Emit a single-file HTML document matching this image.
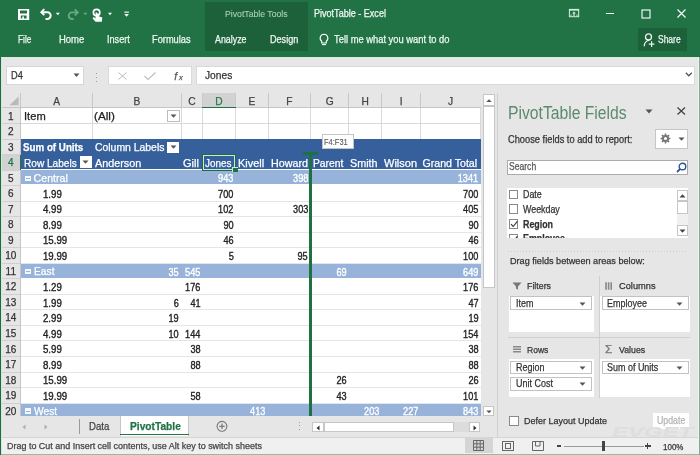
<!DOCTYPE html>
<html><head><meta charset="utf-8"><style>
html,body{margin:0;padding:0;}
body{width:700px;height:455px;overflow:hidden;position:relative;background:#fff;font-family:"Liberation Sans", sans-serif;}
#root{position:absolute;left:0;top:0;width:700px;height:455px;will-change:transform;}
.a{position:absolute;}
.t{line-height:1;white-space:pre;-webkit-text-stroke:0.25px currentColor;}
svg{overflow:visible;}
</style></head><body><div id="root">
<div class="a" style="left:0.00px;top:0.00px;width:700.00px;height:56.50px;background:#217346;"></div>
<div class="a" style="left:205.00px;top:1.50px;width:103.00px;height:49.50px;background:#1c6139;"></div>
<svg class="a" style="left:0;top:0" width="140" height="30" viewBox="0 0 140 30"><path d="M18 9.1h11.2v10.8H18z M20 10.4v3h7v-3z M20.8 15.4v3.1h1.5v-1.9h1.7v1.9h2.6v-3.1z" fill="#fff" fill-rule="evenodd"/><path d="M44.3 9.2L41.3 12.2 44.3 15.2" fill="none" stroke="#fff" stroke-width="1.9" stroke-linejoin="miter"/><path d="M41.8 12.2h5.5a3.4 3.4 0 0 1 0 6.8H45.5" fill="none" stroke="#fff" stroke-width="1.9"/><path d="M55.8 12.8h4l-2 2.5z" fill="#fff"/><path d="M74.8 9.4L77.8 12.4 74.8 15.4" fill="none" stroke="#6aa982" stroke-width="1.9"/><path d="M77.3 12.4h-5.3a3.3 3.3 0 0 0 0 6.6H73.5" fill="none" stroke="#6aa982" stroke-width="1.9"/><path d="M83.3 12.8h4l-2 2.5z" fill="#6aa982"/><circle cx="96.6" cy="12.6" r="3.2" fill="none" stroke="#fff" stroke-width="1.7"/><path d="M95.6 12.4v6l-1.6-1.3-1.5 1.1 3 3.6h6.3l0.5-4.3-3.6-1.3v-2.8h-1.6v-1z" fill="#fff"/><path d="M108 12.8h4l-2 2.5z" fill="#fff"/><rect x="124.3" y="11.6" width="4.6" height="1.1" fill="#fff"/><path d="M124.3 13.9h4.6l-2.3 2.8z" fill="#fff"/></svg>
<div class="a t" style="top:10.00px;font-size:9.2px;color:#a9d0b7;font-weight:normal;left:224.60px;transform-origin:0 7px;transform:scaleX(0.945);-webkit-text-stroke:0.1px currentColor;">PivotTable Tools</div>
<div class="a t" style="top:9.00px;font-size:10.0px;color:#f2f7f4;font-weight:normal;left:313.70px;transform-origin:0 8px;transform:scaleX(0.905);">PivotTable - Excel</div>
<svg class="a" style="left:568px;top:8px;" width="12" height="10" viewBox="0 0 12 10"><rect x="1.4" y="1.4" width="9.3" height="7.3" fill="none" stroke="#d8eee0" stroke-width="1"/><rect x="1" y="1" width="10" height="1.6" fill="#d8eee0"/><path d="M6 3.6l-1.8 2h1.2V8h1.2V5.6h1.2z" fill="#d8eee0"/><path d="M3 6.5v1.5M9 6.5v1.5" stroke="#d8eee0" stroke-width="0.9"/></svg>
<div class="a" style="left:606.00px;top:13.00px;width:8.00px;height:1.20px;background:#fff;"></div>
<svg class="a" style="left:641px;top:8.5px;" width="10" height="10" viewBox="0 0 10 10"><rect x="1" y="1" width="8" height="8" fill="none" stroke="#fff" stroke-width="1.1"/></svg>
<svg class="a" style="left:677px;top:9px;" width="9" height="9" viewBox="0 0 9 9"><path d="M0.5 0.5l8 8M8.5 0.5l-8 8" stroke="#fff" stroke-width="1.1"/></svg>
<div class="a t" style="top:35.00px;font-size:10.3px;color:#f0f7f2;font-weight:normal;left:17.70px;transform-origin:0 8px;transform:scaleX(0.804);">File</div>
<div class="a t" style="top:35.00px;font-size:10.3px;color:#f0f7f2;font-weight:normal;left:59.40px;transform-origin:0 8px;transform:scaleX(0.920);">Home</div>
<div class="a t" style="top:35.00px;font-size:10.3px;color:#f0f7f2;font-weight:normal;left:107.00px;transform-origin:0 8px;transform:scaleX(0.885);">Insert</div>
<div class="a t" style="top:35.00px;font-size:10.3px;color:#f0f7f2;font-weight:normal;left:152.30px;transform-origin:0 8px;transform:scaleX(0.899);">Formulas</div>
<div class="a t" style="top:35.00px;font-size:10.3px;color:#f0f7f2;font-weight:normal;left:214.70px;transform-origin:0 8px;transform:scaleX(0.860);">Analyze</div>
<div class="a t" style="top:35.00px;font-size:10.3px;color:#f0f7f2;font-weight:normal;left:269.50px;transform-origin:0 8px;transform:scaleX(0.883);">Design</div>
<svg class="a" style="left:318px;top:33px;" width="12" height="13" viewBox="0 0 12 13"><path d="M6 1.2a3.9 3.9 0 0 0-2.3 7V10h4.6V8.2A3.9 3.9 0 0 0 6 1.2z" fill="none" stroke="#fff" stroke-width="1.1"/><path d="M4 11.6h4" stroke="#fff" stroke-width="1.1"/></svg>
<div class="a t" style="top:35.00px;font-size:10.3px;color:#f0f7f2;font-weight:normal;left:333.80px;transform-origin:0 8px;transform:scaleX(0.909);">Tell me what you want to do</div>
<div class="a" style="left:638.00px;top:28.40px;width:49.00px;height:22.20px;background:#1c6139;"></div>
<svg class="a" style="left:642px;top:33px;" width="15" height="15" viewBox="0 0 15 15"><circle cx="6.5" cy="3.9" r="3" fill="none" stroke="#eaf4ee" stroke-width="1.3"/><path d="M2.3 13.2a6 6 0 0 1 5.2-6.1" fill="none" stroke="#eaf4ee" stroke-width="1.3"/><path d="M9.6 8.2v5.8M6.8 11.1h5.6" stroke="#eaf4ee" stroke-width="1.2"/></svg>
<div class="a t" style="top:35.00px;font-size:10.3px;color:#f0f7f2;font-weight:normal;left:658.00px;transform-origin:0 8px;transform:scaleX(0.823);">Share</div>
<div class="a" style="left:0.00px;top:56.50px;width:700.00px;height:36.50px;background:#e6e6e6;"></div>
<div class="a" style="left:0.00px;top:56.50px;width:700.00px;height:1.50px;background:#d9eadf;"></div>
<div class="a" style="left:5.50px;top:65.50px;width:78.50px;height:19.00px;background:#fff;box-shadow:inset 0 0 0 1px #d6d6d6;"></div>
<div class="a t" style="top:71.00px;font-size:10.0px;color:#333;font-weight:normal;left:10.60px;transform-origin:0 8px;transform:scaleX(0.923);">D4</div>
<svg class="a" style="left:73px;top:72.5px;" width="7" height="5" viewBox="0 0 7 5"><path d="M0.5 0.5h6l-3 3.5z" fill="#555"/></svg>
<div class="a" style="left:95.50px;top:72.50px;width:1.30px;height:1.30px;background:#9a9a9a;"></div>
<div class="a" style="left:95.50px;top:76.50px;width:1.30px;height:1.30px;background:#9a9a9a;"></div>
<div class="a" style="left:95.50px;top:80.50px;width:1.30px;height:1.30px;background:#9a9a9a;"></div>
<div class="a" style="left:108.00px;top:65.50px;width:84.40px;height:19.00px;background:#fff;box-shadow:inset 0 0 0 1px #dadada;"></div>
<svg class="a" style="left:118px;top:71.5px;" width="9" height="8" viewBox="0 0 9 8"><path d="M0.5 0.5l8 7M8.5 0.5l-8 7" stroke="#bdbdbd" stroke-width="1"/></svg>
<svg class="a" style="left:144px;top:71.5px;" width="12" height="8" viewBox="0 0 12 8"><path d="M0.5 4l3.5 3.5L11.5 0.5" fill="none" stroke="#bdbdbd" stroke-width="1.1"/></svg>
<div class="a t" style="top:71.00px;font-size:10.5px;color:#555;font-weight:normal;left:174.30px;transform-origin:0 9px;font-family:"Liberation Serif",serif;"><i>f</i></div>
<div class="a t" style="top:74.00px;font-size:7.5px;color:#555;font-weight:normal;left:179.00px;transform-origin:0 6px;font-family:"Liberation Serif",serif;"><i>x</i></div>
<div class="a" style="left:195.50px;top:65.50px;width:499.50px;height:19.00px;background:#fff;box-shadow:inset 0 0 0 1px #dadada;"></div>
<div class="a t" style="top:70.00px;font-size:10.6px;color:#333;font-weight:normal;left:204.70px;transform-origin:0 9px;transform:scaleX(0.965);">Jones</div>
<svg class="a" style="left:685px;top:71.5px;" width="8" height="6" viewBox="0 0 8 6"><path d="M0.8 0.8l3 3 3-3" fill="none" stroke="#555" stroke-width="1.3"/></svg>
<div class="a" style="left:0.00px;top:93.00px;width:483.00px;height:323.00px;background:#fff;"></div>
<div class="a" style="left:0.00px;top:93.00px;width:480.60px;height:15.00px;background:#e6e6e6;"></div>
<div class="a" style="left:202.30px;top:93.00px;width:33.40px;height:15.00px;background:#d2d2d2;"></div>
<div class="a" style="left:0.00px;top:107.00px;width:480.60px;height:1.00px;background:#c6c6c6;"></div>
<div class="a" style="left:202.30px;top:106.50px;width:33.40px;height:1.50px;background:#217346;"></div>
<div class="a" style="left:91.80px;top:93.00px;width:1.00px;height:14.00px;background:#c9c9c9;"></div>
<div class="a" style="left:180.90px;top:93.00px;width:1.00px;height:14.00px;background:#c9c9c9;"></div>
<div class="a" style="left:201.80px;top:93.00px;width:1.00px;height:14.00px;background:#c9c9c9;"></div>
<div class="a" style="left:235.20px;top:93.00px;width:1.00px;height:14.00px;background:#c9c9c9;"></div>
<div class="a" style="left:267.60px;top:93.00px;width:1.00px;height:14.00px;background:#c9c9c9;"></div>
<div class="a" style="left:310.20px;top:93.00px;width:1.00px;height:14.00px;background:#c9c9c9;"></div>
<div class="a" style="left:348.20px;top:93.00px;width:1.00px;height:14.00px;background:#c9c9c9;"></div>
<div class="a" style="left:381.10px;top:93.00px;width:1.00px;height:14.00px;background:#c9c9c9;"></div>
<div class="a" style="left:420.20px;top:93.00px;width:1.00px;height:14.00px;background:#c9c9c9;"></div>
<div class="a t" style="top:97.00px;font-size:10.2px;color:#444;font-weight:normal;left:6.65px;width:100px;text-align:center;transform-origin:50% 8px;">A</div>
<div class="a t" style="top:97.00px;font-size:10.2px;color:#444;font-weight:normal;left:86.85px;width:100px;text-align:center;transform-origin:50% 8px;">B</div>
<div class="a t" style="top:97.00px;font-size:10.2px;color:#444;font-weight:normal;left:141.85px;width:100px;text-align:center;transform-origin:50% 8px;">C</div>
<div class="a t" style="top:97.00px;font-size:10.2px;color:#2a7a4b;font-weight:normal;left:169.00px;width:100px;text-align:center;transform-origin:50% 8px;">D</div>
<div class="a t" style="top:97.00px;font-size:10.2px;color:#444;font-weight:normal;left:201.90px;width:100px;text-align:center;transform-origin:50% 8px;">E</div>
<div class="a t" style="top:97.00px;font-size:10.2px;color:#444;font-weight:normal;left:239.40px;width:100px;text-align:center;transform-origin:50% 8px;">F</div>
<div class="a t" style="top:97.00px;font-size:10.2px;color:#444;font-weight:normal;left:279.70px;width:100px;text-align:center;transform-origin:50% 8px;">G</div>
<div class="a t" style="top:97.00px;font-size:10.2px;color:#444;font-weight:normal;left:315.15px;width:100px;text-align:center;transform-origin:50% 8px;">H</div>
<div class="a t" style="top:97.00px;font-size:10.2px;color:#444;font-weight:normal;left:351.15px;width:100px;text-align:center;transform-origin:50% 8px;">I</div>
<div class="a t" style="top:97.00px;font-size:10.2px;color:#444;font-weight:normal;left:400.65px;width:100px;text-align:center;transform-origin:50% 8px;">J</div>
<svg class="a" style="left:8.5px;top:95.5px;" width="10" height="10" viewBox="0 0 10 10"><path d="M9.6 0.4V9.3H0.5z" fill="#b9b9b9"/></svg>
<div class="a" style="left:0.00px;top:108.00px;width:21.00px;height:308.00px;background:#e6e6e6;"></div>
<div class="a" style="left:0.00px;top:154.59px;width:21.00px;height:15.53px;background:#d2d2d2;"></div>
<div class="a" style="left:20.00px;top:93.00px;width:1.00px;height:323.00px;background:#c6c6c6;"></div>
<div class="a" style="left:19.60px;top:154.59px;width:1.60px;height:15.53px;background:#217346;"></div>
<div class="a" style="left:0.00px;top:123.03px;width:20.00px;height:1.00px;background:#d0d0d0;"></div>
<div class="a" style="left:0.00px;top:138.56px;width:20.00px;height:1.00px;background:#d0d0d0;"></div>
<div class="a" style="left:0.00px;top:154.09px;width:20.00px;height:1.00px;background:#d0d0d0;"></div>
<div class="a" style="left:0.00px;top:169.62px;width:20.00px;height:1.00px;background:#d0d0d0;"></div>
<div class="a" style="left:0.00px;top:185.15px;width:20.00px;height:1.00px;background:#d0d0d0;"></div>
<div class="a" style="left:0.00px;top:200.68px;width:20.00px;height:1.00px;background:#d0d0d0;"></div>
<div class="a" style="left:0.00px;top:216.21px;width:20.00px;height:1.00px;background:#d0d0d0;"></div>
<div class="a" style="left:0.00px;top:231.74px;width:20.00px;height:1.00px;background:#d0d0d0;"></div>
<div class="a" style="left:0.00px;top:247.27px;width:20.00px;height:1.00px;background:#d0d0d0;"></div>
<div class="a" style="left:0.00px;top:262.80px;width:20.00px;height:1.00px;background:#d0d0d0;"></div>
<div class="a" style="left:0.00px;top:278.33px;width:20.00px;height:1.00px;background:#d0d0d0;"></div>
<div class="a" style="left:0.00px;top:293.86px;width:20.00px;height:1.00px;background:#d0d0d0;"></div>
<div class="a" style="left:0.00px;top:309.39px;width:20.00px;height:1.00px;background:#d0d0d0;"></div>
<div class="a" style="left:0.00px;top:324.92px;width:20.00px;height:1.00px;background:#d0d0d0;"></div>
<div class="a" style="left:0.00px;top:340.45px;width:20.00px;height:1.00px;background:#d0d0d0;"></div>
<div class="a" style="left:0.00px;top:355.98px;width:20.00px;height:1.00px;background:#d0d0d0;"></div>
<div class="a" style="left:0.00px;top:371.51px;width:20.00px;height:1.00px;background:#d0d0d0;"></div>
<div class="a" style="left:0.00px;top:387.04px;width:20.00px;height:1.00px;background:#d0d0d0;"></div>
<div class="a" style="left:0.00px;top:402.57px;width:20.00px;height:1.00px;background:#d0d0d0;"></div>
<div class="a t" style="top:112.00px;font-size:10.0px;color:#333;font-weight:normal;left:-39.20px;width:100px;text-align:center;transform-origin:50% 8px;">1</div>
<div class="a t" style="top:127.00px;font-size:10.0px;color:#333;font-weight:normal;left:-39.20px;width:100px;text-align:center;transform-origin:50% 8px;">2</div>
<div class="a t" style="top:143.00px;font-size:10.0px;color:#333;font-weight:normal;left:-39.20px;width:100px;text-align:center;transform-origin:50% 8px;">3</div>
<div class="a t" style="top:158.00px;font-size:10.0px;color:#217346;font-weight:normal;left:-39.20px;width:100px;text-align:center;transform-origin:50% 8px;">4</div>
<div class="a t" style="top:174.00px;font-size:10.0px;color:#333;font-weight:normal;left:-39.20px;width:100px;text-align:center;transform-origin:50% 8px;">5</div>
<div class="a t" style="top:189.00px;font-size:10.0px;color:#333;font-weight:normal;left:-39.20px;width:100px;text-align:center;transform-origin:50% 8px;">6</div>
<div class="a t" style="top:205.00px;font-size:10.0px;color:#333;font-weight:normal;left:-39.20px;width:100px;text-align:center;transform-origin:50% 8px;">7</div>
<div class="a t" style="top:220.00px;font-size:10.0px;color:#333;font-weight:normal;left:-39.20px;width:100px;text-align:center;transform-origin:50% 8px;">8</div>
<div class="a t" style="top:236.00px;font-size:10.0px;color:#333;font-weight:normal;left:-39.20px;width:100px;text-align:center;transform-origin:50% 8px;">9</div>
<div class="a t" style="top:251.00px;font-size:10.0px;color:#333;font-weight:normal;left:-39.20px;width:100px;text-align:center;transform-origin:50% 8px;">10</div>
<div class="a t" style="top:267.00px;font-size:10.0px;color:#333;font-weight:normal;left:-39.20px;width:100px;text-align:center;transform-origin:50% 8px;">11</div>
<div class="a t" style="top:282.00px;font-size:10.0px;color:#333;font-weight:normal;left:-39.20px;width:100px;text-align:center;transform-origin:50% 8px;">12</div>
<div class="a t" style="top:298.00px;font-size:10.0px;color:#333;font-weight:normal;left:-39.20px;width:100px;text-align:center;transform-origin:50% 8px;">13</div>
<div class="a t" style="top:313.00px;font-size:10.0px;color:#333;font-weight:normal;left:-39.20px;width:100px;text-align:center;transform-origin:50% 8px;">14</div>
<div class="a t" style="top:329.00px;font-size:10.0px;color:#333;font-weight:normal;left:-39.20px;width:100px;text-align:center;transform-origin:50% 8px;">15</div>
<div class="a t" style="top:345.00px;font-size:10.0px;color:#333;font-weight:normal;left:-39.20px;width:100px;text-align:center;transform-origin:50% 8px;">16</div>
<div class="a t" style="top:360.00px;font-size:10.0px;color:#333;font-weight:normal;left:-39.20px;width:100px;text-align:center;transform-origin:50% 8px;">17</div>
<div class="a t" style="top:376.00px;font-size:10.0px;color:#333;font-weight:normal;left:-39.20px;width:100px;text-align:center;transform-origin:50% 8px;">18</div>
<div class="a t" style="top:391.00px;font-size:10.0px;color:#333;font-weight:normal;left:-39.20px;width:100px;text-align:center;transform-origin:50% 8px;">19</div>
<div class="a t" style="top:407.00px;font-size:10.0px;color:#333;font-weight:normal;left:-39.20px;width:100px;text-align:center;transform-origin:50% 8px;">20</div>
<div class="a" style="left:21.00px;top:123.03px;width:459.60px;height:1.00px;background:#d9d9d9;"></div>
<div class="a" style="left:21.00px;top:138.56px;width:459.60px;height:1.00px;background:#d9d9d9;"></div>
<div class="a" style="left:91.80px;top:108.00px;width:1.00px;height:31.06px;background:#d9d9d9;"></div>
<div class="a" style="left:180.90px;top:108.00px;width:1.00px;height:31.06px;background:#d9d9d9;"></div>
<div class="a" style="left:201.80px;top:108.00px;width:1.00px;height:31.06px;background:#d9d9d9;"></div>
<div class="a" style="left:235.20px;top:108.00px;width:1.00px;height:31.06px;background:#d9d9d9;"></div>
<div class="a" style="left:267.60px;top:108.00px;width:1.00px;height:31.06px;background:#d9d9d9;"></div>
<div class="a" style="left:310.20px;top:108.00px;width:1.00px;height:31.06px;background:#d9d9d9;"></div>
<div class="a" style="left:348.20px;top:108.00px;width:1.00px;height:31.06px;background:#d9d9d9;"></div>
<div class="a" style="left:381.10px;top:108.00px;width:1.00px;height:31.06px;background:#d9d9d9;"></div>
<div class="a" style="left:420.20px;top:108.00px;width:1.00px;height:31.06px;background:#d9d9d9;"></div>
<div class="a" style="left:480.10px;top:108.00px;width:1.00px;height:31.06px;background:#d9d9d9;"></div>
<div class="a" style="left:21.00px;top:139.06px;width:459.60px;height:29.86px;background:#36609b;"></div>
<div class="a" style="left:21.00px;top:170.12px;width:459.60px;height:14.23px;background:#97b3da;"></div>
<div class="a" style="left:21.00px;top:263.30px;width:459.60px;height:14.23px;background:#97b3da;"></div>
<div class="a" style="left:21.00px;top:403.07px;width:459.60px;height:12.93px;background:#97b3da;"></div>
<div class="a" style="left:21.00px;top:200.68px;width:459.60px;height:1.00px;background:#e2e6ec;"></div>
<div class="a" style="left:21.00px;top:216.21px;width:459.60px;height:1.00px;background:#e2e6ec;"></div>
<div class="a" style="left:21.00px;top:231.74px;width:459.60px;height:1.00px;background:#e2e6ec;"></div>
<div class="a" style="left:21.00px;top:247.27px;width:459.60px;height:1.00px;background:#e2e6ec;"></div>
<div class="a" style="left:21.00px;top:262.80px;width:459.60px;height:1.00px;background:#e2e6ec;"></div>
<div class="a" style="left:21.00px;top:293.86px;width:459.60px;height:1.00px;background:#e2e6ec;"></div>
<div class="a" style="left:21.00px;top:309.39px;width:459.60px;height:1.00px;background:#e2e6ec;"></div>
<div class="a" style="left:21.00px;top:324.92px;width:459.60px;height:1.00px;background:#e2e6ec;"></div>
<div class="a" style="left:21.00px;top:340.45px;width:459.60px;height:1.00px;background:#e2e6ec;"></div>
<div class="a" style="left:21.00px;top:355.98px;width:459.60px;height:1.00px;background:#e2e6ec;"></div>
<div class="a" style="left:21.00px;top:371.51px;width:459.60px;height:1.00px;background:#e2e6ec;"></div>
<div class="a" style="left:21.00px;top:387.04px;width:459.60px;height:1.00px;background:#e2e6ec;"></div>
<div class="a" style="left:21.00px;top:402.57px;width:459.60px;height:1.00px;background:#e2e6ec;"></div>
<div class="a t" style="top:142.00px;font-size:10.5px;color:#fff;font-weight:bold;left:23.20px;transform-origin:0 9px;transform:scaleX(0.931);">Sum of Units</div>
<div class="a t" style="top:142.00px;font-size:10.6px;color:#fff;font-weight:normal;left:94.70px;transform-origin:0 9px;transform:scaleX(0.982);">Column Labels</div>
<div class="a t" style="top:158.00px;font-size:10.6px;color:#fff;font-weight:normal;left:23.50px;transform-origin:0 9px;transform:scaleX(0.952);">Row Labels</div>
<div class="a" style="left:167.40px;top:141.50px;width:12.10px;height:11.10px;background:#fff;"></div>
<svg class="a" style="left:169.95px;top:145.05px;" width="7" height="4" viewBox="0 0 7 4"><path d="M0.5 0.5h6l-3 3.2z" fill="#555"/></svg>
<div class="a" style="left:80.00px;top:156.40px;width:11.60px;height:11.60px;background:#fff;"></div>
<svg class="a" style="left:82.3px;top:160.2px;" width="7" height="4" viewBox="0 0 7 4"><path d="M0.5 0.5h6l-3 3.2z" fill="#555"/></svg>
<div class="a" style="left:167.20px;top:110.10px;width:12.80px;height:11.60px;background:#fff;box-shadow:inset 0 0 0 1px #bdbdbd;"></div>
<svg class="a" style="left:170.1px;top:113.9px;" width="7" height="4" viewBox="0 0 7 4"><path d="M0.5 0.5h6l-3 3.2z" fill="#555"/></svg>
<div class="a t" style="top:111.00px;font-size:10.6px;color:#222;font-weight:normal;left:24.00px;transform-origin:0 9px;transform:scaleX(1.051);">Item</div>
<div class="a t" style="top:111.00px;font-size:10.6px;color:#222;font-weight:normal;left:94.20px;transform-origin:0 9px;transform:scaleX(1.109);">(All)</div>
<div class="a t" style="top:158.00px;font-size:10.6px;color:#fff;font-weight:normal;left:94.70px;transform-origin:0 9px;transform:scaleX(1.021);">Anderson</div>
<div class="a t" style="top:158.00px;font-size:10.6px;color:#fff;font-weight:normal;left:183.40px;transform-origin:0 9px;transform:scaleX(1.035);">Gill</div>
<div class="a t" style="top:158.00px;font-size:10.6px;color:#fff;font-weight:normal;left:205.20px;transform-origin:0 9px;transform:scaleX(0.933);">Jones</div>
<div class="a t" style="top:158.00px;font-size:10.6px;color:#fff;font-weight:normal;left:238.00px;transform-origin:0 9px;transform:scaleX(1.036);">Kivell</div>
<div class="a t" style="top:158.00px;font-size:10.6px;color:#fff;font-weight:normal;left:270.60px;transform-origin:0 9px;transform:scaleX(1.013);">Howard</div>
<div class="a t" style="top:158.00px;font-size:10.6px;color:#fff;font-weight:normal;left:313.40px;transform-origin:0 9px;transform:scaleX(0.972);">Parent</div>
<div class="a t" style="top:158.00px;font-size:10.6px;color:#fff;font-weight:normal;left:350.00px;transform-origin:0 9px;transform:scaleX(1.019);">Smith</div>
<div class="a t" style="top:158.00px;font-size:10.6px;color:#fff;font-weight:normal;left:383.60px;transform-origin:0 9px;transform:scaleX(1.038);">Wilson</div>
<div class="a t" style="top:158.00px;font-size:10.6px;color:#fff;font-weight:normal;left:422.50px;transform-origin:0 9px;">Grand Total</div>
<div class="a" style="left:202.00px;top:154.30px;width:33.60px;height:16.40px;box-shadow:inset 0 0 0 1px #1e6b3e, inset 0 0 0 2px #c9ecd6;"></div>
<div class="a" style="left:232.40px;top:167.00px;width:5.20px;height:4.60px;background:#1e7145;box-shadow:inset 1px 1px 0 #c9ecd6;"></div>
<div class="a" style="left:25.00px;top:175.52px;width:5.70px;height:5.20px;background:#f4f7fc;"></div>
<div class="a" style="left:26.00px;top:177.72px;width:3.70px;height:0.80px;background:#97b3da;"></div>
<div class="a t" style="top:173.00px;font-size:10.6px;color:#ffffff;font-weight:normal;left:33.60px;transform-origin:0 9px;">Central</div>
<div class="a t" style="top:174.32px;font-size:10.4px;color:#ffffff;font-weight:normal;right:466.70px;text-align:right;transform-origin:100% 8px;transform:scale(0.880,1.020);-webkit-text-stroke:0.35px currentColor;">943</div>
<div class="a t" style="top:174.32px;font-size:10.4px;color:#ffffff;font-weight:normal;right:392.10px;text-align:right;transform-origin:100% 8px;transform:scale(0.880,1.020);-webkit-text-stroke:0.35px currentColor;">398</div>
<div class="a t" style="top:174.32px;font-size:10.4px;color:#ffffff;font-weight:normal;right:221.40px;text-align:right;transform-origin:100% 8px;transform:scale(0.880,1.020);-webkit-text-stroke:0.35px currentColor;">1341</div>
<div class="a t" style="top:189.85px;font-size:10.4px;color:#222;font-weight:normal;left:43.40px;transform-origin:0 8px;transform:scale(0.930,1.020);-webkit-text-stroke:0.35px currentColor;">1.99</div>
<div class="a t" style="top:189.85px;font-size:10.4px;color:#222;font-weight:normal;right:466.70px;text-align:right;transform-origin:100% 8px;transform:scale(0.880,1.020);-webkit-text-stroke:0.35px currentColor;">700</div>
<div class="a t" style="top:189.85px;font-size:10.4px;color:#222;font-weight:normal;right:221.40px;text-align:right;transform-origin:100% 8px;transform:scale(0.880,1.020);-webkit-text-stroke:0.35px currentColor;">700</div>
<div class="a t" style="top:205.38px;font-size:10.4px;color:#222;font-weight:normal;left:43.40px;transform-origin:0 8px;transform:scale(0.930,1.020);-webkit-text-stroke:0.35px currentColor;">4.99</div>
<div class="a t" style="top:205.38px;font-size:10.4px;color:#222;font-weight:normal;right:466.70px;text-align:right;transform-origin:100% 8px;transform:scale(0.880,1.020);-webkit-text-stroke:0.35px currentColor;">102</div>
<div class="a t" style="top:205.38px;font-size:10.4px;color:#222;font-weight:normal;right:392.10px;text-align:right;transform-origin:100% 8px;transform:scale(0.880,1.020);-webkit-text-stroke:0.35px currentColor;">303</div>
<div class="a t" style="top:205.38px;font-size:10.4px;color:#222;font-weight:normal;right:221.40px;text-align:right;transform-origin:100% 8px;transform:scale(0.880,1.020);-webkit-text-stroke:0.35px currentColor;">405</div>
<div class="a t" style="top:220.91px;font-size:10.4px;color:#222;font-weight:normal;left:43.40px;transform-origin:0 8px;transform:scale(0.930,1.020);-webkit-text-stroke:0.35px currentColor;">8.99</div>
<div class="a t" style="top:220.91px;font-size:10.4px;color:#222;font-weight:normal;right:466.70px;text-align:right;transform-origin:100% 8px;transform:scale(0.880,1.020);-webkit-text-stroke:0.35px currentColor;">90</div>
<div class="a t" style="top:220.91px;font-size:10.4px;color:#222;font-weight:normal;right:221.40px;text-align:right;transform-origin:100% 8px;transform:scale(0.880,1.020);-webkit-text-stroke:0.35px currentColor;">90</div>
<div class="a t" style="top:236.44px;font-size:10.4px;color:#222;font-weight:normal;left:43.40px;transform-origin:0 8px;transform:scale(0.930,1.020);-webkit-text-stroke:0.35px currentColor;">15.99</div>
<div class="a t" style="top:236.44px;font-size:10.4px;color:#222;font-weight:normal;right:466.70px;text-align:right;transform-origin:100% 8px;transform:scale(0.880,1.020);-webkit-text-stroke:0.35px currentColor;">46</div>
<div class="a t" style="top:236.44px;font-size:10.4px;color:#222;font-weight:normal;right:221.40px;text-align:right;transform-origin:100% 8px;transform:scale(0.880,1.020);-webkit-text-stroke:0.35px currentColor;">46</div>
<div class="a t" style="top:251.97px;font-size:10.4px;color:#222;font-weight:normal;left:43.40px;transform-origin:0 8px;transform:scale(0.930,1.020);-webkit-text-stroke:0.35px currentColor;">19.99</div>
<div class="a t" style="top:251.97px;font-size:10.4px;color:#222;font-weight:normal;right:466.70px;text-align:right;transform-origin:100% 8px;transform:scale(0.880,1.020);-webkit-text-stroke:0.35px currentColor;">5</div>
<div class="a t" style="top:251.97px;font-size:10.4px;color:#222;font-weight:normal;right:392.10px;text-align:right;transform-origin:100% 8px;transform:scale(0.880,1.020);-webkit-text-stroke:0.35px currentColor;">95</div>
<div class="a t" style="top:251.97px;font-size:10.4px;color:#222;font-weight:normal;right:221.40px;text-align:right;transform-origin:100% 8px;transform:scale(0.880,1.020);-webkit-text-stroke:0.35px currentColor;">100</div>
<div class="a" style="left:25.00px;top:268.70px;width:5.70px;height:5.20px;background:#f4f7fc;"></div>
<div class="a" style="left:26.00px;top:270.90px;width:3.70px;height:0.80px;background:#97b3da;"></div>
<div class="a t" style="top:266.00px;font-size:10.6px;color:#ffffff;font-weight:normal;left:33.60px;transform-origin:0 9px;transform:scaleX(0.970);">East</div>
<div class="a t" style="top:267.50px;font-size:10.4px;color:#ffffff;font-weight:normal;right:521.00px;text-align:right;transform-origin:100% 8px;transform:scale(0.880,1.020);-webkit-text-stroke:0.35px currentColor;">35</div>
<div class="a t" style="top:267.50px;font-size:10.4px;color:#ffffff;font-weight:normal;right:499.50px;text-align:right;transform-origin:100% 8px;transform:scale(0.880,1.020);-webkit-text-stroke:0.35px currentColor;">545</div>
<div class="a t" style="top:267.50px;font-size:10.4px;color:#ffffff;font-weight:normal;right:353.70px;text-align:right;transform-origin:100% 8px;transform:scale(0.880,1.020);-webkit-text-stroke:0.35px currentColor;">69</div>
<div class="a t" style="top:267.50px;font-size:10.4px;color:#ffffff;font-weight:normal;right:221.40px;text-align:right;transform-origin:100% 8px;transform:scale(0.880,1.020);-webkit-text-stroke:0.35px currentColor;">649</div>
<div class="a t" style="top:283.03px;font-size:10.4px;color:#222;font-weight:normal;left:43.40px;transform-origin:0 8px;transform:scale(0.930,1.020);-webkit-text-stroke:0.35px currentColor;">1.29</div>
<div class="a t" style="top:283.03px;font-size:10.4px;color:#222;font-weight:normal;right:499.50px;text-align:right;transform-origin:100% 8px;transform:scale(0.880,1.020);-webkit-text-stroke:0.35px currentColor;">176</div>
<div class="a t" style="top:283.03px;font-size:10.4px;color:#222;font-weight:normal;right:221.40px;text-align:right;transform-origin:100% 8px;transform:scale(0.880,1.020);-webkit-text-stroke:0.35px currentColor;">176</div>
<div class="a t" style="top:298.56px;font-size:10.4px;color:#222;font-weight:normal;left:43.40px;transform-origin:0 8px;transform:scale(0.930,1.020);-webkit-text-stroke:0.35px currentColor;">1.99</div>
<div class="a t" style="top:298.56px;font-size:10.4px;color:#222;font-weight:normal;right:521.00px;text-align:right;transform-origin:100% 8px;transform:scale(0.880,1.020);-webkit-text-stroke:0.35px currentColor;">6</div>
<div class="a t" style="top:298.56px;font-size:10.4px;color:#222;font-weight:normal;right:499.50px;text-align:right;transform-origin:100% 8px;transform:scale(0.880,1.020);-webkit-text-stroke:0.35px currentColor;">41</div>
<div class="a t" style="top:298.56px;font-size:10.4px;color:#222;font-weight:normal;right:221.40px;text-align:right;transform-origin:100% 8px;transform:scale(0.880,1.020);-webkit-text-stroke:0.35px currentColor;">47</div>
<div class="a t" style="top:314.09px;font-size:10.4px;color:#222;font-weight:normal;left:43.40px;transform-origin:0 8px;transform:scale(0.930,1.020);-webkit-text-stroke:0.35px currentColor;">2.99</div>
<div class="a t" style="top:314.09px;font-size:10.4px;color:#222;font-weight:normal;right:521.00px;text-align:right;transform-origin:100% 8px;transform:scale(0.880,1.020);-webkit-text-stroke:0.35px currentColor;">19</div>
<div class="a t" style="top:314.09px;font-size:10.4px;color:#222;font-weight:normal;right:221.40px;text-align:right;transform-origin:100% 8px;transform:scale(0.880,1.020);-webkit-text-stroke:0.35px currentColor;">19</div>
<div class="a t" style="top:329.62px;font-size:10.4px;color:#222;font-weight:normal;left:43.40px;transform-origin:0 8px;transform:scale(0.930,1.020);-webkit-text-stroke:0.35px currentColor;">4.99</div>
<div class="a t" style="top:329.62px;font-size:10.4px;color:#222;font-weight:normal;right:521.00px;text-align:right;transform-origin:100% 8px;transform:scale(0.880,1.020);-webkit-text-stroke:0.35px currentColor;">10</div>
<div class="a t" style="top:329.62px;font-size:10.4px;color:#222;font-weight:normal;right:499.50px;text-align:right;transform-origin:100% 8px;transform:scale(0.880,1.020);-webkit-text-stroke:0.35px currentColor;">144</div>
<div class="a t" style="top:329.62px;font-size:10.4px;color:#222;font-weight:normal;right:221.40px;text-align:right;transform-origin:100% 8px;transform:scale(0.880,1.020);-webkit-text-stroke:0.35px currentColor;">154</div>
<div class="a t" style="top:345.15px;font-size:10.4px;color:#222;font-weight:normal;left:43.40px;transform-origin:0 8px;transform:scale(0.930,1.020);-webkit-text-stroke:0.35px currentColor;">5.99</div>
<div class="a t" style="top:345.15px;font-size:10.4px;color:#222;font-weight:normal;right:499.50px;text-align:right;transform-origin:100% 8px;transform:scale(0.880,1.020);-webkit-text-stroke:0.35px currentColor;">38</div>
<div class="a t" style="top:345.15px;font-size:10.4px;color:#222;font-weight:normal;right:221.40px;text-align:right;transform-origin:100% 8px;transform:scale(0.880,1.020);-webkit-text-stroke:0.35px currentColor;">38</div>
<div class="a t" style="top:360.68px;font-size:10.4px;color:#222;font-weight:normal;left:43.40px;transform-origin:0 8px;transform:scale(0.930,1.020);-webkit-text-stroke:0.35px currentColor;">8.99</div>
<div class="a t" style="top:360.68px;font-size:10.4px;color:#222;font-weight:normal;right:499.50px;text-align:right;transform-origin:100% 8px;transform:scale(0.880,1.020);-webkit-text-stroke:0.35px currentColor;">88</div>
<div class="a t" style="top:360.68px;font-size:10.4px;color:#222;font-weight:normal;right:221.40px;text-align:right;transform-origin:100% 8px;transform:scale(0.880,1.020);-webkit-text-stroke:0.35px currentColor;">88</div>
<div class="a t" style="top:376.21px;font-size:10.4px;color:#222;font-weight:normal;left:43.40px;transform-origin:0 8px;transform:scale(0.930,1.020);-webkit-text-stroke:0.35px currentColor;">15.99</div>
<div class="a t" style="top:376.21px;font-size:10.4px;color:#222;font-weight:normal;right:353.70px;text-align:right;transform-origin:100% 8px;transform:scale(0.880,1.020);-webkit-text-stroke:0.35px currentColor;">26</div>
<div class="a t" style="top:376.21px;font-size:10.4px;color:#222;font-weight:normal;right:221.40px;text-align:right;transform-origin:100% 8px;transform:scale(0.880,1.020);-webkit-text-stroke:0.35px currentColor;">26</div>
<div class="a t" style="top:391.74px;font-size:10.4px;color:#222;font-weight:normal;left:43.40px;transform-origin:0 8px;transform:scale(0.930,1.020);-webkit-text-stroke:0.35px currentColor;">19.99</div>
<div class="a t" style="top:391.74px;font-size:10.4px;color:#222;font-weight:normal;right:499.50px;text-align:right;transform-origin:100% 8px;transform:scale(0.880,1.020);-webkit-text-stroke:0.35px currentColor;">58</div>
<div class="a t" style="top:391.74px;font-size:10.4px;color:#222;font-weight:normal;right:353.70px;text-align:right;transform-origin:100% 8px;transform:scale(0.880,1.020);-webkit-text-stroke:0.35px currentColor;">43</div>
<div class="a t" style="top:391.74px;font-size:10.4px;color:#222;font-weight:normal;right:221.40px;text-align:right;transform-origin:100% 8px;transform:scale(0.880,1.020);-webkit-text-stroke:0.35px currentColor;">101</div>
<div class="a" style="left:25.00px;top:408.47px;width:5.70px;height:5.20px;background:#f4f7fc;"></div>
<div class="a" style="left:26.00px;top:410.67px;width:3.70px;height:0.80px;background:#97b3da;"></div>
<div class="a t" style="top:406.00px;font-size:10.6px;color:#ffffff;font-weight:normal;left:33.60px;transform-origin:0 9px;transform:scaleX(0.970);">West</div>
<div class="a t" style="top:407.27px;font-size:10.4px;color:#ffffff;font-weight:normal;right:434.50px;text-align:right;transform-origin:100% 8px;transform:scale(0.880,1.020);-webkit-text-stroke:0.35px currentColor;">413</div>
<div class="a t" style="top:407.27px;font-size:10.4px;color:#ffffff;font-weight:normal;right:321.00px;text-align:right;transform-origin:100% 8px;transform:scale(0.880,1.020);-webkit-text-stroke:0.35px currentColor;">203</div>
<div class="a t" style="top:407.27px;font-size:10.4px;color:#ffffff;font-weight:normal;right:282.00px;text-align:right;transform-origin:100% 8px;transform:scale(0.880,1.020);-webkit-text-stroke:0.35px currentColor;">227</div>
<div class="a t" style="top:407.27px;font-size:10.4px;color:#ffffff;font-weight:normal;right:221.40px;text-align:right;transform-origin:100% 8px;transform:scale(0.880,1.020);-webkit-text-stroke:0.35px currentColor;">843</div>
<div class="a" style="left:308.90px;top:152.40px;width:3.40px;height:263.60px;background:#1f7144;"></div>
<div class="a" style="left:303.40px;top:152.40px;width:14.30px;height:3.00px;background:#1f7144;"></div>
<div class="a" style="left:322.10px;top:134.10px;width:31.80px;height:14.80px;background:#fff;box-shadow:inset 0 0 0 1px #c4c4c4;"></div>
<div class="a t" style="top:137.00px;font-size:9.6px;color:#555;font-weight:normal;left:323.50px;transform-origin:0 8px;transform:scaleX(0.782);-webkit-text-stroke:0.1px currentColor;">F4:F31</div>
<div class="a" style="left:480.60px;top:93.00px;width:16.40px;height:323.00px;background:#e6e6e6;"></div>
<div class="a" style="left:483.20px;top:94.20px;width:11.40px;height:11.40px;background:#fff;box-shadow:inset 0 0 0 1px #c6c6c6;"></div>
<svg class="a" style="left:486px;top:98.8px;" width="6" height="4" viewBox="0 0 6 4"><path d="M0.3 3h5.4l-2.7-2.8z" fill="#555"/></svg>
<div class="a" style="left:483.20px;top:105.60px;width:11.40px;height:182.40px;background:#fff;box-shadow:inset 0 0 0 1px #c6c6c6;"></div>
<div class="a" style="left:483.40px;top:405.70px;width:10.80px;height:10.30px;background:#fff;box-shadow:inset 0 0 0 1px #c6c6c6;"></div>
<svg class="a" style="left:486px;top:409.6px;" width="6" height="4" viewBox="0 0 6 4"><path d="M0.3 0.5h5.4l-2.7 2.8z" fill="#555"/></svg>
<div class="a" style="left:0.00px;top:416.00px;width:497.00px;height:21.00px;background:#e6e6e6;"></div>
<svg class="a" style="left:22px;top:424px;" width="4" height="6" viewBox="0 0 4 6"><path d="M3.5 0.5v5L0.5 3z" fill="#b0b0b0"/></svg>
<svg class="a" style="left:44px;top:424px;" width="4" height="6" viewBox="0 0 4 6"><path d="M0.5 0.5v5L3.5 3z" fill="#b0b0b0"/></svg>
<div class="a" style="left:78.50px;top:419.20px;width:1.00px;height:15.10px;background:#9a9a9a;"></div>
<div class="a t" style="top:422.00px;font-size:10.3px;color:#444;font-weight:normal;left:89.00px;transform-origin:0 8px;transform:scaleX(0.932);">Data</div>
<div class="a" style="left:120.00px;top:416.00px;width:69.20px;height:19.50px;background:#fff;box-shadow:inset 1px 0 0 #c6c6c6, inset -1px 0 0 #c6c6c6;"></div>
<div class="a" style="left:120.00px;top:433.60px;width:69.20px;height:1.90px;background:#217346;"></div>
<div class="a t" style="top:421.00px;font-size:11.0px;color:#217346;font-weight:bold;left:129.50px;transform-origin:0 9px;transform:scaleX(0.928);">PivotTable</div>
<svg class="a" style="left:215px;top:420.5px;" width="14" height="11" viewBox="0 0 14 11"><circle cx="7" cy="5.3" r="4.9" fill="none" stroke="#777" stroke-width="1.1"/><path d="M7 2.6v5.4M4.3 5.3h5.4" stroke="#777" stroke-width="1.2"/></svg>
<div class="a" style="left:299.00px;top:421.50px;width:1.30px;height:1.20px;background:#9a9a9a;"></div>
<div class="a" style="left:299.00px;top:425.00px;width:1.30px;height:1.20px;background:#9a9a9a;"></div>
<div class="a" style="left:299.00px;top:428.50px;width:1.30px;height:1.20px;background:#9a9a9a;"></div>
<div class="a" style="left:311.90px;top:421.50px;width:11.90px;height:10.50px;background:#fff;box-shadow:inset 0 0 0 1px #c6c6c6;"></div>
<svg class="a" style="left:315.5px;top:424.5px;" width="4" height="6" viewBox="0 0 4 6"><path d="M3.5 0.5v5L0.5 3z" fill="#333"/></svg>
<div class="a" style="left:324.00px;top:421.50px;width:129.70px;height:10.50px;background:#fff;box-shadow:inset 0 0 0 1px #c6c6c6;"></div>
<div class="a" style="left:453.70px;top:421.50px;width:14.90px;height:10.50px;background:#dcdcdc;"></div>
<div class="a" style="left:468.60px;top:421.50px;width:11.90px;height:10.50px;background:#fff;box-shadow:inset 0 0 0 1px #c6c6c6;"></div>
<svg class="a" style="left:472.5px;top:424.5px;" width="4" height="6" viewBox="0 0 4 6"><path d="M0.5 0.5v5L3.5 3z" fill="#333"/></svg>
<div class="a" style="left:497.00px;top:93.00px;width:203.00px;height:344.00px;background:#e6e6e6;"></div>
<div class="a" style="left:497.00px;top:93.00px;width:1.00px;height:344.00px;background:#d0d0d0;"></div>
<div class="a t" style="top:105.00px;font-size:17.5px;color:#5b8a6c;font-weight:normal;left:508.20px;transform-origin:0 14px;transform:scaleX(0.897);-webkit-text-stroke:0;">PivotTable Fields</div>
<svg class="a" style="left:645px;top:108.5px;" width="8" height="5" viewBox="0 0 8 5"><path d="M0.5 0.5h7l-3.5 4z" fill="#555"/></svg>
<svg class="a" style="left:677px;top:107px;" width="9" height="8" viewBox="0 0 9 8"><path d="M0.5 0.5l7.5 7M8 0.5l-7.5 7" stroke="#444" stroke-width="1.3"/></svg>
<div class="a t" style="top:135.00px;font-size:10.4px;color:#333;font-weight:normal;left:508.20px;transform-origin:0 8px;transform:scaleX(0.894);">Choose fields to add to report:</div>
<div class="a" style="left:654.60px;top:129.00px;width:33.70px;height:20.40px;background:#fff;box-shadow:inset 0 0 0 1px #c6c6c6;"></div>
<svg class="a" style="left:660px;top:133px;" width="11" height="11" viewBox="0 0 11 11"><circle cx="5.5" cy="5.5" r="2.6" fill="none" stroke="#777" stroke-width="2"/><path d="M5.5 0.6v2.2M5.5 8.2v2.2M0.6 5.5h2.2M8.2 5.5h2.2M2 2l1.5 1.5M7.5 7.5L9 9M2 9l1.5-1.5M7.5 3.5L9 2" stroke="#777" stroke-width="1.6"/></svg>
<svg class="a" style="left:678px;top:137px;" width="7" height="4" viewBox="0 0 7 4"><path d="M0.5 0.5h6l-3 3.2z" fill="#555"/></svg>
<div class="a" style="left:507.30px;top:159.70px;width:181.00px;height:15.30px;background:#fff;box-shadow:inset 0 0 0 1px #ababab;"></div>
<div class="a t" style="top:162.00px;font-size:10.2px;color:#555;font-weight:normal;left:508.70px;transform-origin:0 8px;transform:scaleX(0.841);">Search</div>
<svg class="a" style="left:676px;top:162px;" width="11" height="11" viewBox="0 0 11 11"><circle cx="6.5" cy="4.5" r="3.3" fill="none" stroke="#2b579a" stroke-width="1.4"/><path d="M4.2 6.8L1 10" stroke="#2b579a" stroke-width="1.8"/></svg>
<div class="a" style="left:506.70px;top:188.20px;width:181.60px;height:49.80px;background:#fff;"></div>
<div class="a" style="left:508.80px;top:189.60px;width:9.60px;height:9.40px;background:#fff;box-shadow:inset 0 0 0 1px #8a8a8a;"></div>
<div class="a t" style="top:190.00px;font-size:10.2px;color:#333;font-weight:normal;left:523.40px;transform-origin:0 8px;transform:scaleX(0.870);">Date</div>
<div class="a" style="left:508.80px;top:204.40px;width:9.60px;height:9.40px;background:#fff;box-shadow:inset 0 0 0 1px #8a8a8a;"></div>
<div class="a t" style="top:205.00px;font-size:10.2px;color:#333;font-weight:normal;left:523.40px;transform-origin:0 8px;transform:scaleX(0.870);">Weekday</div>
<div class="a" style="left:508.80px;top:219.20px;width:9.60px;height:9.40px;background:#fff;box-shadow:inset 0 0 0 1px #8a8a8a;"></div>
<svg class="a" style="left:508.8px;top:219.20000000000002px;" width="10" height="10" viewBox="0 0 10 10"><path d="M2 5.2l2.2 2.3L8.3 2.3" fill="none" stroke="#333" stroke-width="1.1"/></svg>
<div class="a t" style="top:220.00px;font-size:10.2px;color:#333;font-weight:bold;left:523.40px;transform-origin:0 8px;transform:scaleX(0.870);">Region</div>
<div class="a" style="left:508.80px;top:234.00px;width:9.60px;height:9.40px;background:#fff;box-shadow:inset 0 0 0 1px #8a8a8a;"></div>
<svg class="a" style="left:508.8px;top:234.00000000000003px;" width="10" height="10" viewBox="0 0 10 10"><path d="M2 5.2l2.2 2.3L8.3 2.3" fill="none" stroke="#333" stroke-width="1.1"/></svg>
<div class="a t" style="top:234.00px;font-size:10.2px;color:#333;font-weight:bold;left:523.40px;transform-origin:0 8px;transform:scaleX(0.870);">Employee</div>
<div class="a" style="left:506.70px;top:238.00px;width:183.00px;height:12.00px;background:#e6e6e6;"></div>
<div class="a" style="left:676.60px;top:190.20px;width:11.70px;height:46.30px;background:#f0f0f0;"></div>
<div class="a" style="left:676.60px;top:190.20px;width:11.70px;height:10.60px;background:#fff;box-shadow:inset 0 0 0 1px #c6c6c6;"></div>
<svg class="a" style="left:679px;top:193.5px;" width="7" height="4" viewBox="0 0 7 4"><path d="M0.5 3.5h6l-3-3.2z" fill="#444"/></svg>
<div class="a" style="left:676.60px;top:200.80px;width:11.70px;height:13.70px;background:#fff;box-shadow:inset 0 0 0 1px #c6c6c6;"></div>
<div class="a" style="left:676.60px;top:225.40px;width:11.70px;height:11.10px;background:#fff;box-shadow:inset 0 0 0 1px #c6c6c6;"></div>
<svg class="a" style="left:679px;top:229px;" width="7" height="4" viewBox="0 0 7 4"><path d="M0.5 0.5h6l-3 3.2z" fill="#444"/></svg>
<div class="a" style="left:508.00px;top:250.60px;width:180.00px;height:1.00px;background:repeating-linear-gradient(90deg,#cbcbcb 0 1px,transparent 1px 3px);"></div>
<div class="a t" style="top:256.00px;font-size:9.6px;color:#333;font-weight:normal;left:509.60px;transform-origin:0 8px;transform:scaleX(0.950);">Drag fields between areas below:</div>
<div class="a" style="left:598.50px;top:276.00px;width:1.00px;height:122.00px;background:#cfcfcf;"></div>
<div class="a" style="left:508.00px;top:337.00px;width:182.00px;height:1.00px;background:#cfcfcf;"></div>
<svg class="a" style="left:511.5px;top:281.5px;" width="10" height="8" viewBox="0 0 10 8"><path d="M0.5 0.5h9L6 4.5v3.3L4 6.5v-2z" fill="#777"/></svg>
<div class="a t" style="top:281.00px;font-size:9.7px;color:#333;font-weight:normal;left:527.20px;transform-origin:0 8px;transform:scaleX(0.909);">Filters</div>
<svg class="a" style="left:604.5px;top:281.5px;" width="8" height="8" viewBox="0 0 8 8"><path d="M1 0.3v7.4M3.6 0.3v7.4M6.2 0.3v7.4" stroke="#888" stroke-width="1.6"/></svg>
<div class="a t" style="top:281.00px;font-size:9.7px;color:#333;font-weight:normal;left:618.90px;transform-origin:0 8px;transform:scaleX(0.956);">Columns</div>
<div class="a" style="left:509.00px;top:295.80px;width:85.00px;height:36.60px;background:#fff;"></div>
<div class="a" style="left:600.40px;top:295.80px;width:89.30px;height:36.60px;background:#fff;"></div>
<div class="a" style="left:510.20px;top:296.40px;width:82.30px;height:14.00px;background:#fff;box-shadow:inset 0 0 0 1px #c2c2c2;"></div>
<div class="a t" style="top:299.00px;font-size:10.2px;color:#333;font-weight:normal;left:515.60px;transform-origin:0 8px;transform:scaleX(0.880);">Item</div>
<svg class="a" style="left:579.3px;top:302.0px;" width="7" height="4" viewBox="0 0 7 4"><path d="M0.5 0.5h6l-3 3.2z" fill="#555"/></svg>
<div class="a" style="left:601.50px;top:296.40px;width:87.20px;height:14.00px;background:#fff;box-shadow:inset 0 0 0 1px #c2c2c2;"></div>
<div class="a t" style="top:299.00px;font-size:10.2px;color:#333;font-weight:normal;left:606.90px;transform-origin:0 8px;transform:scaleX(0.880);">Employee</div>
<svg class="a" style="left:675.5px;top:302.0px;" width="7" height="4" viewBox="0 0 7 4"><path d="M0.5 0.5h6l-3 3.2z" fill="#555"/></svg>
<svg class="a" style="left:513px;top:345.5px;" width="9" height="7" viewBox="0 0 9 7"><path d="M0 0.8h8M0 3.3h8M0 5.8h8" stroke="#888" stroke-width="1.5"/></svg>
<div class="a t" style="top:345.00px;font-size:9.7px;color:#333;font-weight:normal;left:527.30px;transform-origin:0 8px;transform:scaleX(0.882);">Rows</div>
<div class="a t" style="top:344.00px;font-size:11px;color:#777;font-weight:normal;left:605.30px;transform-origin:0 9px;transform:scaleX(1.061);">Σ</div>
<div class="a t" style="top:345.00px;font-size:9.7px;color:#333;font-weight:normal;left:618.60px;transform-origin:0 8px;transform:scaleX(0.905);">Values</div>
<div class="a" style="left:509.00px;top:359.00px;width:85.00px;height:37.50px;background:#fff;"></div>
<div class="a" style="left:600.40px;top:359.00px;width:89.30px;height:37.50px;background:#fff;"></div>
<div class="a" style="left:510.20px;top:360.80px;width:82.30px;height:13.20px;background:#fff;box-shadow:inset 0 0 0 1px #c2c2c2;"></div>
<div class="a t" style="top:363.00px;font-size:10.2px;color:#333;font-weight:normal;left:515.60px;transform-origin:0 8px;transform:scaleX(0.880);">Region</div>
<svg class="a" style="left:579.3px;top:366.40000000000003px;" width="7" height="4" viewBox="0 0 7 4"><path d="M0.5 0.5h6l-3 3.2z" fill="#555"/></svg>
<div class="a" style="left:510.20px;top:376.60px;width:82.30px;height:14.00px;background:#fff;box-shadow:inset 0 0 0 1px #c2c2c2;"></div>
<div class="a t" style="top:379.00px;font-size:10.2px;color:#333;font-weight:normal;left:515.60px;transform-origin:0 8px;transform:scaleX(0.880);">Unit Cost</div>
<svg class="a" style="left:579.3px;top:382.20000000000005px;" width="7" height="4" viewBox="0 0 7 4"><path d="M0.5 0.5h6l-3 3.2z" fill="#555"/></svg>
<div class="a" style="left:601.50px;top:360.80px;width:87.20px;height:13.20px;background:#fff;box-shadow:inset 0 0 0 1px #c2c2c2;"></div>
<div class="a t" style="top:363.00px;font-size:10.2px;color:#333;font-weight:normal;left:606.90px;transform-origin:0 8px;transform:scaleX(0.880);">Sum of Units</div>
<svg class="a" style="left:675.5px;top:366.40000000000003px;" width="7" height="4" viewBox="0 0 7 4"><path d="M0.5 0.5h6l-3 3.2z" fill="#555"/></svg>
<div class="a" style="left:509.00px;top:416.40px;width:10.00px;height:9.40px;background:#fff;box-shadow:inset 0 0 0 1px #8a8a8a;"></div>
<div class="a t" style="top:416.00px;font-size:9.5px;color:#333;font-weight:normal;left:524.30px;transform-origin:0 8px;transform:scaleX(0.947);">Defer Layout Update</div>
<div class="a" style="left:652.50px;top:412.60px;width:36.40px;height:16.10px;background:#fff;"></div>
<div class="a t" style="top:416.00px;font-size:10.0px;color:#b5b5b5;font-weight:normal;left:656.60px;transform-origin:0 8px;transform:scaleX(0.878);">Update</div>
<div class="a" style="left:0.00px;top:437.00px;width:700.00px;height:18.00px;background:#f0f0f0;"></div>
<div class="a" style="left:0.00px;top:437.00px;width:700.00px;height:0.70px;background:#d5d5d5;"></div>
<div class="a t" style="top:442.00px;font-size:8.7px;color:#444;font-weight:normal;left:6.90px;transform-origin:0 7px;transform:scaleX(1.031);">Drag to Cut and Insert cell contents, use Alt key to switch sheets</div>
<div class="a" style="left:464.50px;top:437.70px;width:28.80px;height:15.80px;background:#d5d5d5;"></div>
<svg class="a" style="left:473px;top:440px;" width="11" height="11" viewBox="0 0 11 11"><path d="M0.5 0.5h10v10h-10zM0.5 3.8h10M0.5 7.2h10M3.8 0.5v10M7.2 0.5v10" fill="none" stroke="#666" stroke-width="1"/></svg>
<svg class="a" style="left:502px;top:441px;" width="12" height="10" viewBox="0 0 12 10"><rect x="0.5" y="0.5" width="11" height="9" fill="none" stroke="#666" stroke-width="1"/><rect x="3.5" y="2.5" width="5" height="5" fill="none" stroke="#666" stroke-width="1"/></svg>
<svg class="a" style="left:532px;top:441px;" width="12" height="10" viewBox="0 0 12 10"><path d="M0.5 0.5h11v9h-11zM3.5 0.5v4.5h4.5V0.5" fill="none" stroke="#666" stroke-width="1"/></svg>
<div class="a" style="left:557.00px;top:445.40px;width:4.00px;height:1.20px;background:#444;"></div>
<div class="a" style="left:563.80px;top:445.60px;width:80.50px;height:0.80px;background:#9a9a9a;"></div>
<div class="a" style="left:601.90px;top:441.00px;width:2.90px;height:9.50px;background:#444;"></div>
<div class="a" style="left:645.00px;top:445.40px;width:5.80px;height:1.20px;background:#444;"></div>
<div class="a" style="left:647.30px;top:443.00px;width:1.20px;height:6.00px;background:#444;"></div>
<div class="a t" style="top:443.00px;font-size:9.0px;color:#333;font-weight:normal;left:663.40px;transform-origin:0 7px;transform:scaleX(0.887);">100%</div>
<div class="a" style="left:0.00px;top:454.00px;width:700.00px;height:1.00px;background:#8fbf9f;"></div>
<div class="a" style="left:0.00px;top:56.50px;width:1.00px;height:398.50px;background:#1e6b3e;"></div>
<div class="a" style="left:1.00px;top:56.50px;width:0.80px;height:397.50px;background:#d5e8db;"></div>
<div class="a" style="left:698.00px;top:56.50px;width:1.00px;height:397.50px;background:#eef5f0;"></div>
<div class="a" style="left:699.00px;top:56.50px;width:1.00px;height:398.50px;background:#86a893;"></div>
<div class="a t" style="top:424.00px;font-size:15px;color:#dedede;font-weight:bold;left:612.00px;transform-origin:0 13px;transform:scaleX(1.598);"><i>EVGET</i></div>
</div></body></html>
